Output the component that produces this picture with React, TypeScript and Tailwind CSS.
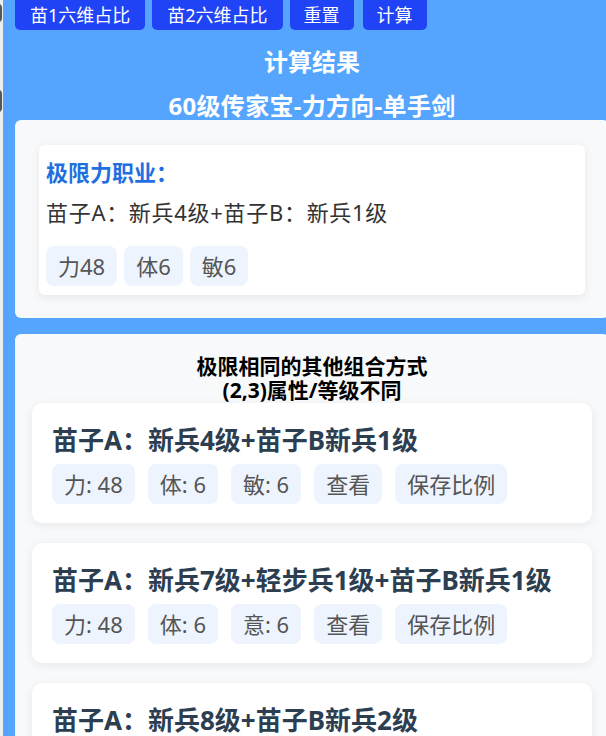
import React from "react";

const font = { fontFamily: '"Noto Sans", "Noto Sans CJK SC", sans-serif' };

function Tag({ children }: { children: React.ReactNode }) {
  return (
    <span className="inline-flex h-[40px] items-center rounded-[8px] bg-[#eef4fd] px-[12px] text-[22px] font-normal text-[#555]">
      {children}
    </span>
  );
}

function ComboCard({ title, tags }: { title: string; tags: string[] }) {
  return (
    <div className="rounded-[10px] bg-white px-[20px] pb-[19px] pt-[22px] shadow-[0_2px_10px_rgba(0,0,0,0.07)]">
      <div className="text-[26px] font-bold leading-[30px] text-[#2c3e50]">{title}</div>
      <div className="mt-[9px] flex flex-wrap gap-[13px]">
        {tags.map((t) => (
          <Tag key={t}>{t}</Tag>
        ))}
      </div>
    </div>
  );
}

export default function App() {
  return (
    <div className="relative h-[736px] w-[606px] overflow-hidden bg-[#55a5ff]" style={font}>
      <div className="absolute left-0 top-0 h-full w-[3px] bg-[#eeeeee]">
        <div className="absolute left-[-8px] top-[3px] h-[20px] w-[10px] rounded-full bg-[#555]" />
        <div className="absolute left-[-8px] top-[89px] h-[24px] w-[10px] rounded-full bg-[#555]" />
      </div>
      <div className="ml-[3px] w-[618px] px-[12px]">
        <div className="flex">
          <button className="mr-[7px] h-[30px] rounded-b-[5px] bg-[#1f43f5] px-[15px] text-[18px] leading-[26px] text-white">苗1六维占比</button>
          <button className="mr-[7px] h-[30px] rounded-b-[5px] bg-[#1f43f5] px-[15px] text-[18px] leading-[26px] text-white">苗2六维占比</button>
          <button className="mr-[9px] h-[30px] rounded-b-[5px] bg-[#1f43f5] px-[14px] text-[18px] leading-[26px] text-white">重置</button>
          <button className="h-[30px] rounded-b-[5px] bg-[#1f43f5] px-[14px] text-[18px] leading-[26px] text-white">计算</button>
        </div>
        <h2 className="mt-[17px] text-center text-[24px] font-bold leading-[30px] text-white">计算结果</h2>
        <h2 className="mt-[14px] text-center text-[24px] font-bold leading-[29px] tracking-[0.3px] text-white">60级传家宝-力方向-单手剑</h2>

        <div className="rounded-[6px] bg-[#f8f9fa] pb-[23px] pl-[24px] pr-[24px] pt-[25px]">
          <div className="rounded-[6px] bg-white px-[7px] pb-[9px] pt-[12px] shadow-[0_2px_8px_rgba(0,0,0,0.08)]">
            <div className="text-[22px] font-bold leading-[30px] text-[#1f6fdf]">极限力职业：</div>
            <div className="mt-[10px] text-[22px] leading-[30px] tracking-[0.7px] text-[#333]">苗子A：新兵4级+苗子B：新兵1级</div>
            <div className="mt-[19px] flex gap-[7px]">
              <Tag>力48</Tag>
              <Tag>体6</Tag>
              <Tag>敏6</Tag>
            </div>
          </div>
        </div>

        <div className="mt-[16px] rounded-[6px] bg-[#f8f9fa] pb-[20px] pl-[17px] pr-[17px] pt-[20px]">
          <div className="text-center text-[21px] font-bold leading-[24px] text-black">
            <div>极限相同的其他组合方式</div>
            <div>(2,3)属性/等级不同</div>
          </div>
          <div className="mt-[1px] flex flex-col gap-[20px]">
            <ComboCard title="苗子A：新兵4级+苗子B新兵1级" tags={["力: 48", "体: 6", "敏: 6", "查看", "保存比例"]} />
            <ComboCard title="苗子A：新兵7级+轻步兵1级+苗子B新兵1级" tags={["力: 48", "体: 6", "意: 6", "查看", "保存比例"]} />
            <ComboCard title="苗子A：新兵8级+苗子B新兵2级" tags={["力: 48", "体: 6", "敏: 6", "查看", "保存比例"]} />
          </div>
        </div>
      </div>
    </div>
  );
}
